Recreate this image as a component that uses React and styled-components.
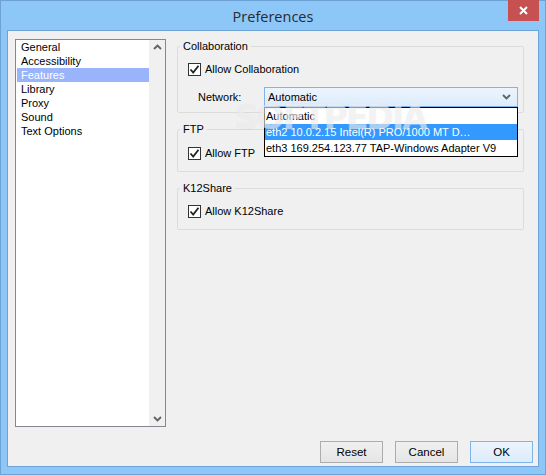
import React from 'react';
import styled, { createGlobalStyle } from 'styled-components';

const GlobalStyle = createGlobalStyle`
  html, body {
    margin: 0;
    padding: 0;
    background: #ffffff;
  }
  * {
    box-sizing: border-box;
  }
`;

const FONT = `"Liberation Sans", Arial, sans-serif`;

const Window = styled.div`
  width: 546px;
  height: 475px;
  border: 1px solid #6ea2d4;
  background: #8cc7f8;
  display: flex;
  flex-direction: column;
  font-family: ${FONT};
  font-size: 11px;
  color: #000;
  position: relative;
`;

const TitleBar = styled.div`
  height: 29px;
  display: flex;
  align-items: center;
  justify-content: center;
  position: relative;
`;

const Title = styled.span`
  font-family: "Open Sans", ${FONT};
  font-size: 14.5px;
  color: #2b2b2b;
  margin-top: 2px;
`;

const CloseButton = styled.div`
  position: absolute;
  top: -1px;
  right: 6px;
  width: 31px;
  height: 21px;
  background: #c75050;
  display: flex;
  align-items: center;
  justify-content: center;
`;

const Client = styled.div`
  flex: 1;
  margin: 0 6px 7px 6px;
  border: 1px solid #6fa3d6;
  background: #f0f0f0;
  padding: 8px 5px 3px 7px;
  display: flex;
  flex-direction: column;
`;

const Body = styled.div`
  flex: 1;
  display: flex;
  gap: 11px;
  min-height: 0;
`;

const ListBox = styled.div`
  width: 151px;
  border: 1px solid #828790;
  background: #fff;
  display: flex;
`;

const ListItems = styled.div`
  flex: 1;
  padding-left: 1px;
`;

const ListItem = styled.div`
  height: 14px;
  line-height: 14px;
  padding-left: 4px;
  background: ${(p) => (p.$selected ? '#99b4fa' : 'transparent')};
  color: ${(p) => (p.$selected ? '#fff' : '#000')};
  white-space: nowrap;
`;

const ScrollTrack = styled.div`
  width: 16px;
  background: #f0f0f0;
  display: flex;
  flex-direction: column;
  justify-content: space-between;
  align-items: center;
  padding: 4px 0 4px 0;
`;

const RightPane = styled.div`
  width: 347px;
  display: flex;
  flex-direction: column;
  gap: 8px;
  position: relative;
  margin-top: -1px;
`;

const Group = styled.fieldset`
  margin: 0;
  border: 1px solid #dcdcdc;
  border-radius: 2px;
  padding: 0 0 ${(p) => p.$padBottom || 10}px 0;
  min-width: 0;
`;

const Legend = styled.legend`
  margin-left: 2px;
  padding: 0 3px;
  line-height: 16px;
  font-size: 11px;
`;

const CheckRow = styled.div`
  display: flex;
  align-items: center;
  gap: 4px;
  height: 16px;
  padding-left: 10px;
  margin-top: ${(p) => p.$top || 7}px;
`;

const Box = styled.div`
  width: 13px;
  height: 13px;
  border: 1px solid #333;
  background: #fff;
  display: flex;
  align-items: center;
  justify-content: center;
`;

const NetworkRow = styled.div`
  display: flex;
  align-items: center;
  margin-top: 10px;
  padding-left: 20px;
  position: relative;
`;

const FieldLabel = styled.span`
  width: 66px;
`;

const Combo = styled.div`
  width: 254px;
  height: 20px;
  border: 1px solid #7eb4ea;
  background: linear-gradient(#ecf4fc, #dcecfc);
  display: flex;
  align-items: center;
  justify-content: space-between;
  padding: 0 6px 0 3px;
`;

const Popup = styled.div`
  position: absolute;
  left: 86px;
  top: 20px;
  width: 254px;
  border: 1px solid #000;
  background: #fff;
  z-index: 2;
`;

const PopupItem = styled.div`
  height: 16px;
  line-height: 16px;
  padding-left: 1px;
  white-space: nowrap;
  background: ${(p) => (p.$selected ? '#3399ff' : '#fff')};
  color: ${(p) => (p.$selected ? '#fff' : '#000')};
`;

const Watermark = styled.div`
  position: absolute;
  left: 58px;
  top: 60px;
  font-family: "DejaVu Sans", ${FONT};
  font-weight: bold;
  font-size: 33px;
  letter-spacing: -2px;
  color: rgba(255, 255, 255, 0.5);
  text-shadow: 0 0 1px rgba(170, 170, 170, 0.3);
  pointer-events: none;
  z-index: 3;
`;

const Footer = styled.div`
  display: flex;
  justify-content: flex-end;
  gap: 12px;
  margin-top: 14px;
`;

const Button = styled.div`
  width: 63px;
  height: 22px;
  display: flex;
  align-items: center;
  justify-content: center;
  font-size: 11.5px;
  border: 1px solid ${(p) => (p.$default ? '#7eb4ea' : '#acacac')};
  background: ${(p) =>
    p.$default ? 'linear-gradient(#ecf4fc, #dcecfc)' : 'linear-gradient(#f0f0f0, #e5e5e5)'};
`;

const Chevron = ({ up }) => (
  <svg width="9" height="6" viewBox="0 0 9 6">
    <path
      d={up ? 'M1 5 L4.5 1.5 L8 5' : 'M1 1 L4.5 4.5 L8 1'}
      fill="none"
      stroke="#606060"
      strokeWidth="1.8"
    />
  </svg>
);

const Check = () => (
  <svg width="11" height="11" viewBox="0 0 11 11">
    <path d="M1.5 5.5 L4.2 8.5 L9.5 1.8" fill="none" stroke="#222" strokeWidth="1.8" />
  </svg>
);

function CheckBox({ label, top }) {
  return (
    <CheckRow $top={top}>
      <Box>
        <Check />
      </Box>
      <span>{label}</span>
    </CheckRow>
  );
}

const sections = ['General', 'Accessibility', 'Features', 'Library', 'Proxy', 'Sound', 'Text Options'];

export default function App() {
  return (
    <>
      <GlobalStyle />
      <Window>
        <TitleBar>
          <Title>Preferences</Title>
          <CloseButton>
            <svg width="9" height="9" viewBox="0 0 9 9">
              <path d="M1 1 L8 8 M8 1 L1 8" stroke="#fff" strokeWidth="2" />
            </svg>
          </CloseButton>
        </TitleBar>
        <Client>
          <Body>
            <ListBox>
              <ListItems>
                {sections.map((s) => (
                  <ListItem key={s} $selected={s === 'Features'}>
                    {s}
                  </ListItem>
                ))}
              </ListItems>
              <ScrollTrack>
                <Chevron up />
                <Chevron />
              </ScrollTrack>
            </ListBox>
            <RightPane>
              <Group $padBottom={5}>
                <Legend>Collaboration</Legend>
                <CheckBox label="Allow Collaboration" top={7} />
                <NetworkRow>
                  <FieldLabel>Network:</FieldLabel>
                  <Combo>
                    <span>Automatic</span>
                    <Chevron />
                  </Combo>
                  <Popup>
                    <PopupItem>Automatic</PopupItem>
                    <PopupItem $selected>eth2 10.0.2.15 Intel(R) PRO/1000 MT D…</PopupItem>
                    <PopupItem>eth3 169.254.123.77 TAP-Windows Adapter V9</PopupItem>
                  </Popup>
                </NetworkRow>
              </Group>
              <Group>
                <Legend>FTP</Legend>
                <CheckBox label="Allow FTP" top={8} />
              </Group>
              <Group>
                <Legend>K12Share</Legend>
                <CheckBox label="Allow K12Share" top={7} />
              </Group>
              <Watermark>SOFTPEDIA</Watermark>
            </RightPane>
          </Body>
          <Footer>
            <Button>Reset</Button>
            <Button>Cancel</Button>
            <Button $default>OK</Button>
          </Footer>
        </Client>
      </Window>
    </>
  );
}
